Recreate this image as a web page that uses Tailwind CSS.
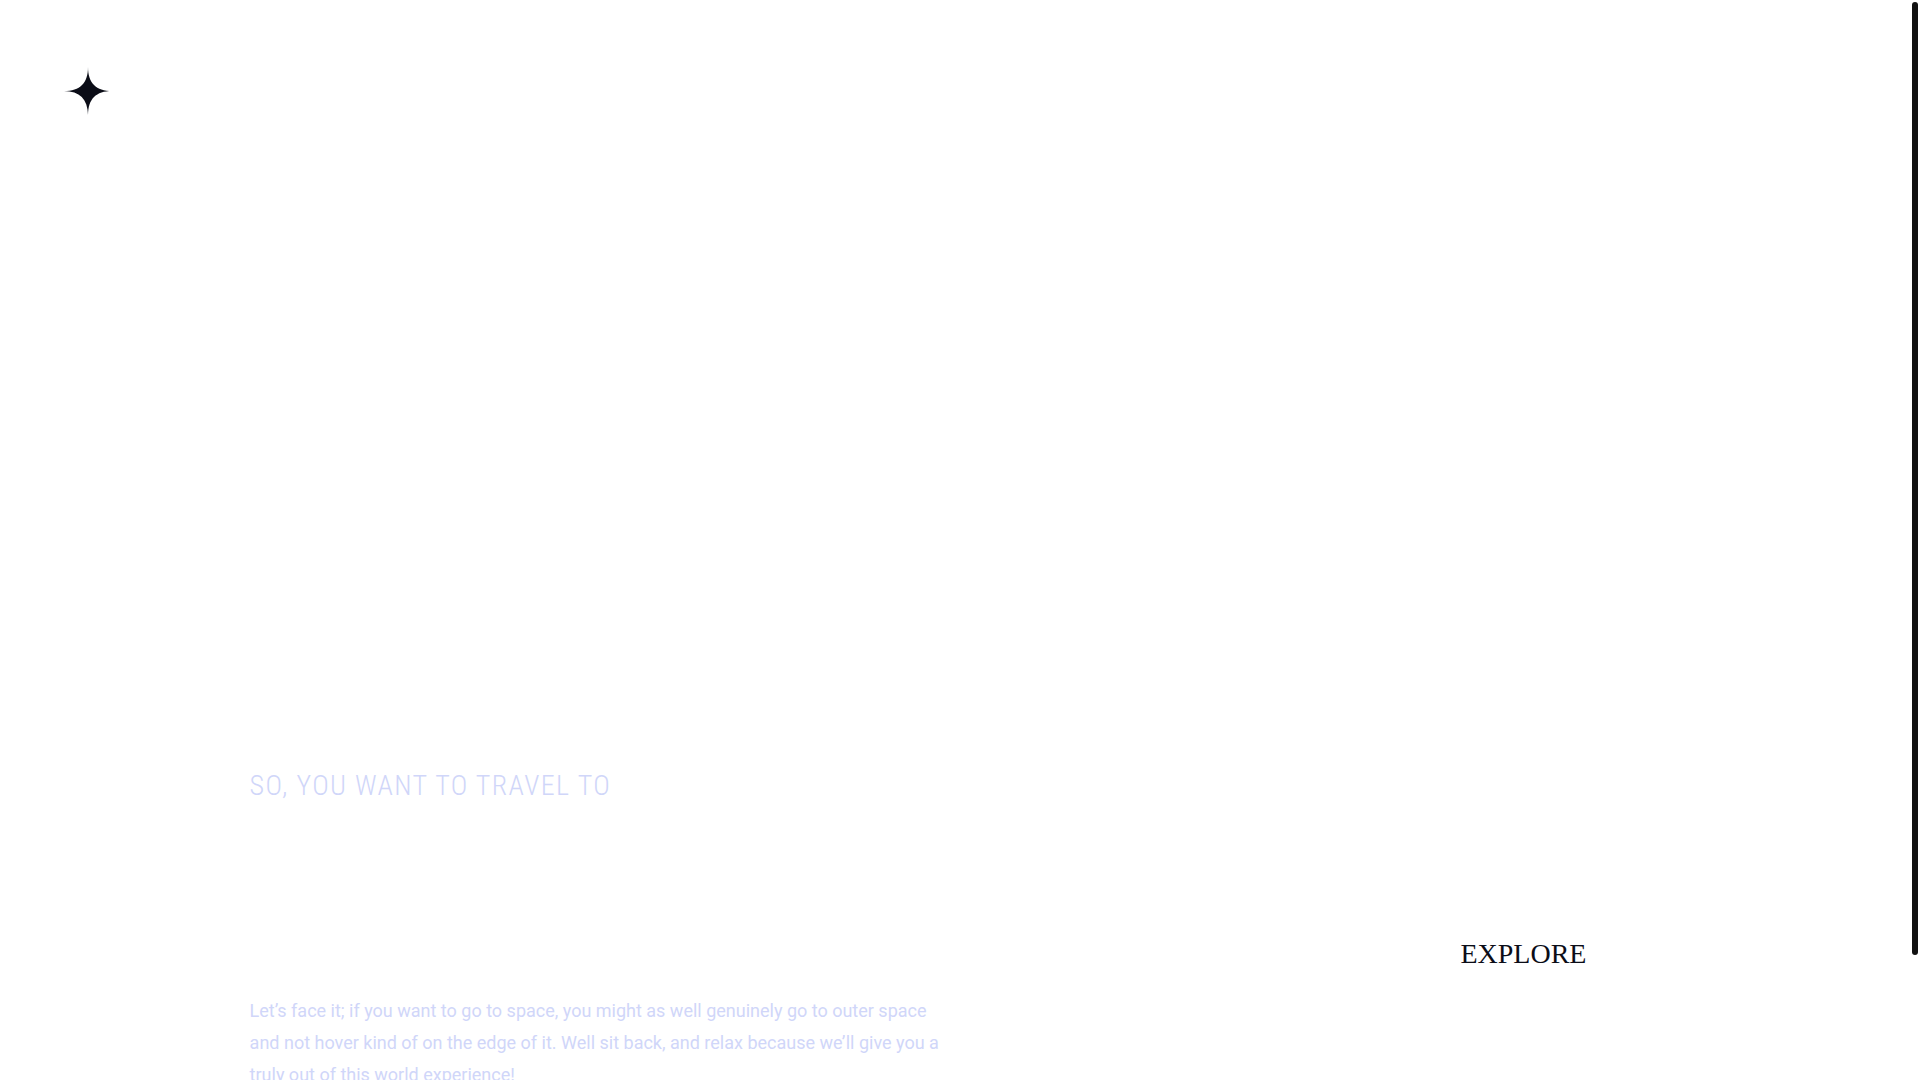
<!DOCTYPE html>
<html lang="en">
<head>
    <meta charset="UTF-8">
    <meta name="viewport" content="width=device-width, initial-scale=1.0">
    <title>Space tourism</title>
    <script src="https://cdn.jsdelivr.net/npm/@tailwindcss/browser@4"></script>
</head>
<body class="h-screen overflow-hidden bg-white text-[#0b0d17]">
    <header class="flex px-16 pt-[67px]">
        <a href="#" aria-label="Home">
            <svg class="size-12" viewBox="0 0 48 48" fill="none">
                <circle cx="24" cy="24" r="24" fill="#fff"/>
                <path fill="#0b0d17" fill-rule="evenodd" d="M24 0c0 16-8 24-24 24 15.718.114 23.718 8.114 24 24 0-16 8-24 24-24-16 0-24-8-24-24z"/>
            </svg>
        </a>
    </header>

    <main class="flex items-end justify-between px-[13%] pt-[653px]">
        <div class="w-full max-w-[690px] text-[#d0d6f9]">
            <h1 class="mb-[191px] font-['Roboto_Condensed','Roboto',sans-serif] text-[28px] leading-9 font-light tracking-wider uppercase">So, you want to travel to</h1>
            <p class="font-['Roboto',sans-serif] text-lg leading-8">
                Let’s face it; if you want to go to space, you might as well genuinely go to outer space and not hover kind of on the edge of it. Well sit back, and relax because we’ll give you a truly out of this world experience!
            </p>
        </div>
        <a href="#" class="mr-2.5 grid size-[274px] shrink-0 place-items-center rounded-full bg-white font-['Liberation_Serif',serif] text-[28px] uppercase">Explore</a>
    </main>

    <!-- scroll indicator -->
    <div class="fixed top-[2px] right-[2px] h-[953px] w-[6px] rounded-full bg-[#111]"></div>
</body>
</html>
